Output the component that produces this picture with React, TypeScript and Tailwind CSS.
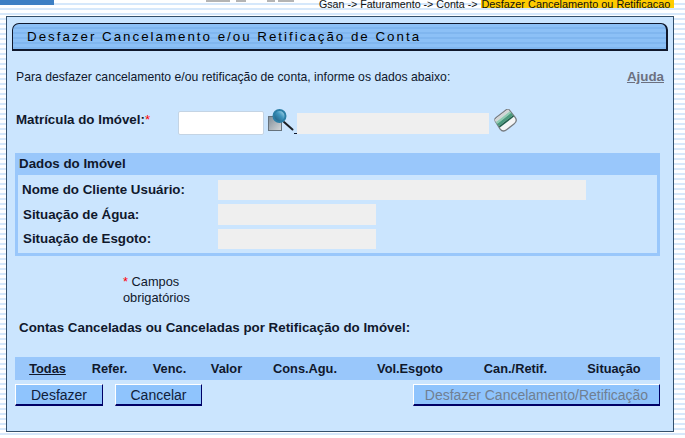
import React from 'react';

const font = "font-['Liberation_Sans',Arial,sans-serif]";

const columns = [
  { label: 'Todas', width: 'w-[65px]', link: true },
  { label: 'Refer.', width: 'w-[59px]' },
  { label: 'Venc.', width: 'w-[61px]' },
  { label: 'Valor', width: 'w-[53px]' },
  { label: 'Cons.Agu.', width: 'w-[104px]' },
  { label: 'Vol.Esgoto', width: 'w-[106px]' },
  { label: 'Can./Retif.', width: 'w-[105px]' },
  { label: 'Situação', width: 'w-[92px]' },
];

// clipped menu remains along the very top of the page
const topMarks = [
  { width: 'w-[24px]', gap: 'ml-0' },
  { width: 'w-[10px]', gap: 'ml-[6px]' },
  { width: 'w-[8px]', gap: 'ml-[21px]' },
  { width: 'w-[16px]', gap: 'ml-[3px]' },
];

const SearchIcon = () => (
  <svg width="26" height="23" viewBox="0 0 26 23" className="shrink-0">
    <defs>
      <linearGradient id="doc" x1="0" y1="0" x2="1" y2="1">
        <stop offset="0" stopColor="#7f8c97" />
        <stop offset="1" stopColor="#d5d8da" />
      </linearGradient>
      <linearGradient id="lens" x1="0" y1="1" x2="1" y2="0">
        <stop offset="0" stopColor="#174f73" />
        <stop offset="0.55" stopColor="#3d94bd" />
        <stop offset="1" stopColor="#c8eef8" />
      </linearGradient>
    </defs>
    <rect x="0.5" y="8.5" width="13" height="14" fill="url(#doc)" stroke="#66727c" />
    <path d="M16 14 L24.5 21.5" stroke="#1b1f24" strokeWidth="2" strokeLinecap="round" />
    <circle cx="11.5" cy="8" r="6" fill="url(#lens)" stroke="#2b7ea6" strokeWidth="2" />
  </svg>
);

const EraserIcon = () => (
  <svg width="25" height="23" viewBox="0 0 25 23" className="shrink-0">
    <g transform="rotate(-38 12.5 11.5)">
      <path d="M4 6 Q4 3.5 7 3.5 H19 Q22 3.5 22 6 V15 Q22 19.5 17 19.5 H8 Q3 19.5 3 15 Z" fill="#f4f5f5" stroke="#777c80" strokeWidth="1.3" />
      <rect x="4" y="4.2" width="17.5" height="2.6" fill="#d2d5d6" />
      <rect x="3.7" y="6.8" width="18" height="2.2" fill="#8fcbb2" />
      <rect x="3.7" y="9" width="18" height="3" fill="#4a9a7d" />
      <rect x="3.7" y="12" width="18" height="1.6" fill="#1f5f4b" />
    </g>
  </svg>
);

const ActionButton = ({ children, disabled, className }: { children: React.ReactNode; disabled?: boolean; className: string }) => (
  <button
    disabled={disabled}
    className={`h-[22px] bg-[#8fc4fd] border-t border-l border-t-white border-l-white border-b-2 border-r border-b-[#000066] border-r-[#000066] text-[14px] leading-none ${disabled ? 'text-[#6f7f92]' : 'text-[#10203a]'} ${className}`}
  >
    {children}
  </button>
);

const ReadonlyRow = ({ label, width, height, labelClass }: { label: string; width: string; height: string; labelClass: string }) => (
  <div className="flex items-center">
    <div className={`w-[196px] text-[13.33px] font-bold text-[#10182c] ${labelClass}`}>{label}</div>
    <div className={`bg-[#efefef] ${width} ${height}`} />
  </div>
);

export default function App() {
  return (
    <div className={`${font} w-[685px] h-[438px] overflow-hidden bg-[repeating-linear-gradient(to_bottom,#ffffff_0px,#ffffff_3px,#d6e8fb_3px,#d6e8fb_5px)]`}>
      {/* top strip with breadcrumb */}
      <div className="relative h-4 overflow-hidden">
        <div className="absolute left-0 top-0 w-[54px] h-[5px] bg-[#3d7fc4]" />
        <div className="absolute left-[206px] top-0 flex h-[2px]">
          {topMarks.map((mark, i) => (
            <div key={i} className={`h-[2px] bg-[#b4b4b4] ${mark.width} ${mark.gap}`} />
          ))}
        </div>
        <div className="absolute left-[319px] top-[-2px] flex leading-[12px] text-[#111] whitespace-nowrap">
          <span className="text-[10.67px]">Gsan -&gt; Faturamento -&gt; Conta -&gt;&nbsp;</span>
          <span className="bg-[#ffcc00] h-[10px] pr-[4px] ml-px text-[10.9px]">Desfazer Cancelamento ou Retificacao</span>
        </div>
      </div>

      {/* main panel */}
      <div className="ml-[6px] w-[668px] h-[416px] border border-[#34506b] bg-[#cbe5fe] pt-[6px] pl-[5px]">
        <div className="w-[656px] h-[28px] flex items-center pl-[14px] rounded-t-[7px] border-t border-l border-b-2 border-r-2 border-[#10182c] bg-[repeating-linear-gradient(to_bottom,#8cc0f6_0px,#8cc0f6_3px,#80b6ef_3px,#80b6ef_5px)]">
          <span className="text-[13.33px] tracking-[2px] text-[#000] whitespace-nowrap">Desfazer Cancelamento e/ou Retificação de Conta</span>
        </div>

        <div className="flex items-center justify-between w-[648px] mt-[19px] ml-[4px] h-[14px]">
          <span className="text-[12.2px] text-[#10182c]">Para desfazer cancelamento e/ou retificação de conta, informe os dados abaixo:</span>
          <a className="text-[13.33px] font-bold underline text-[#6b7080]">Ajuda</a>
        </div>

        <div className="flex items-center h-[24px] mt-[27px] ml-[4px]">
          <div className="w-[162px] mt-[-6px] text-[13.33px] font-bold text-[#10182c]">
            Matrícula do Imóvel:<span className="text-[#ff0000] font-normal">*</span>
          </div>
          <div className="w-[86px] h-[24px] bg-white rounded-[2px] border border-[#c4d4e4]" />
          <div className="ml-[4px] mt-[-8px]"><SearchIcon /></div>
          <div className="w-[3px] h-px bg-[#10182c] self-end mb-[1px]" />
          <div className="w-[192px] h-[21px] bg-[#efefef]" />
          <div className="ml-[4px] mt-[-6px]"><EraserIcon /></div>
        </div>

        <div className="w-[645px] h-[103px] mt-[18px] ml-[3px] border-[3px] border-t-0 border-[#99c7fb]">
          <div className="h-[22px] bg-[#99c7fb] -mx-[3px] pl-[4px] flex items-center text-[13.33px] font-bold text-[#10182c]">Dados do Imóvel</div>
          <div className="flex flex-col pt-[5px] pl-[4px] gap-[4px]">
            <ReadonlyRow label="Nome do Cliente Usuário:" width="w-[368px]" height="h-[20px]" labelClass="pl-0" />
            <ReadonlyRow label="Situação de Água:" width="w-[158px]" height="h-[21px]" labelClass="pl-px" />
            <ReadonlyRow label="Situação de Esgoto:" width="w-[158px]" height="h-[20px]" labelClass="pl-px" />
          </div>
        </div>

        <div className="ml-[111px] mt-[18px] w-[80px] text-[12.8px] leading-[16px] text-[#10182c]">
          <span className="text-[#ff0000]">*</span> Campos obrigatórios
        </div>

        <div className="ml-[7px] mt-[14px] text-[13.33px] leading-[16px] font-bold text-[#10182c] whitespace-nowrap">
          Contas Canceladas ou Canceladas por Retificação do Imóvel:
        </div>

        <div className="flex items-center w-[645px] h-[23px] ml-[3px] mt-[21px] bg-[#99c7fb] text-[12.8px] font-bold text-[#10182c]">
          {columns.map((col) => (
            <div key={col.label} className={`${col.width} text-center ${col.link ? 'underline' : ''}`}>
              {col.label}
            </div>
          ))}
        </div>

        <div className="flex w-[645px] ml-[3px] mt-[4px]">
          <ActionButton className="w-[88px]">Desfazer</ActionButton>
          <ActionButton className="w-[87px] ml-[12px]">Cancelar</ActionButton>
          <ActionButton disabled className="w-[247px] ml-auto">Desfazer Cancelamento/Retificação</ActionButton>
        </div>
      </div>
    </div>
  );
}
